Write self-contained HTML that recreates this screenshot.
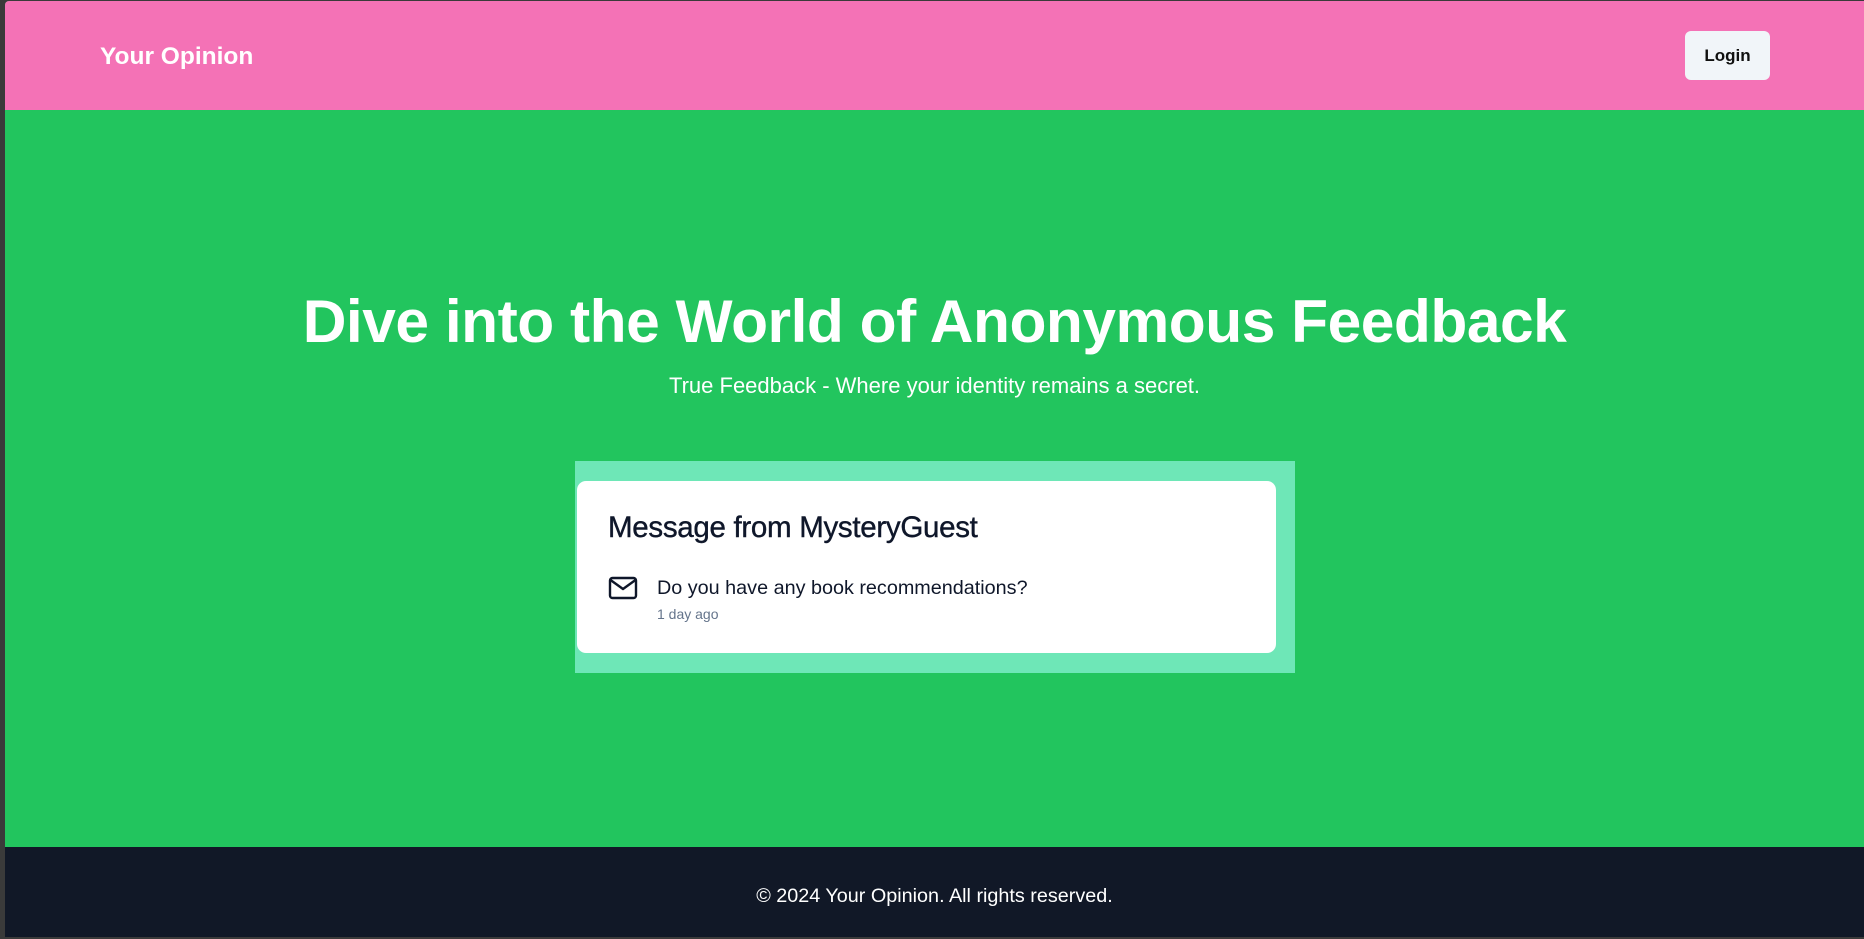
<!DOCTYPE html>
<html><head><meta charset="utf-8"><style>
*{margin:0;padding:0;box-sizing:border-box}
body{width:1864px;height:939px;background:#3a3a3a;font-family:"Liberation Sans",sans-serif;position:relative;overflow:hidden}
.page{position:absolute;left:5px;top:1px;right:0;bottom:2px;background:#22c55e;border-radius:4px 0 0 0;overflow:hidden}
header{position:absolute;left:0;top:0;right:0;height:109px;background:#f472b6}
.logo{position:absolute;left:95px;top:42px;color:#fff;font-weight:bold;font-size:24.5px}
.login{position:absolute;left:1680px;top:30px;width:85px;height:49px;background:#f1f5f9;border-radius:6px;font-size:17px;font-weight:bold;color:#111;display:flex;align-items:center;justify-content:center}
h1{position:absolute;left:0;right:0;top:285px;text-align:center;color:#fff;font-size:60.5px;font-weight:bold;letter-spacing:-0.5px}
.sub{position:absolute;left:0;right:0;top:372px;text-align:center;color:#fff;font-size:22px}
.outer{position:absolute;left:570px;top:460px;width:720px;height:212px;background:#6ee7b7}
.card{position:absolute;left:2px;top:20px;width:699px;height:172px;background:#fff;border-radius:9px}
.card h2{position:absolute;left:31px;top:30px;font-size:29.5px;font-weight:normal;color:#0f172a;letter-spacing:-0.3px;-webkit-text-stroke:0.4px #0f172a}
.card svg{position:absolute;left:31px;top:94px}
.msg{position:absolute;left:80px;top:96px;font-size:19.8px;color:#0f172a}
.time{position:absolute;left:80px;top:125px;font-size:14px;color:#64748b}
footer{position:absolute;left:0;right:0;bottom:0;height:90px;background:#111827;color:#fff;font-size:19.8px;text-align:center;line-height:98px}
</style></head><body>
<div class="page">
<header><div class="logo">Your Opinion</div><div class="login">Login</div></header>
<h1>Dive into the World of Anonymous Feedback</h1>
<div class="sub">True Feedback - Where your identity remains a secret.</div>
<div class="outer"><div class="card">
<h2>Message from MysteryGuest</h2>
<svg width="30" height="26" viewBox="0 0 30 26" fill="none" stroke="#0f172a" stroke-width="2.4" stroke-linejoin="round" stroke-linecap="round"><rect x="2" y="3" width="26" height="20" rx="2.5"/><path d="M2.5 5 L15 14 L27.5 5"/></svg>
<div class="msg">Do you have any book recommendations?</div>
<div class="time">1 day ago</div>
</div></div>
<footer>© 2024 Your Opinion. All rights reserved.</footer>
</div>
</body></html>
